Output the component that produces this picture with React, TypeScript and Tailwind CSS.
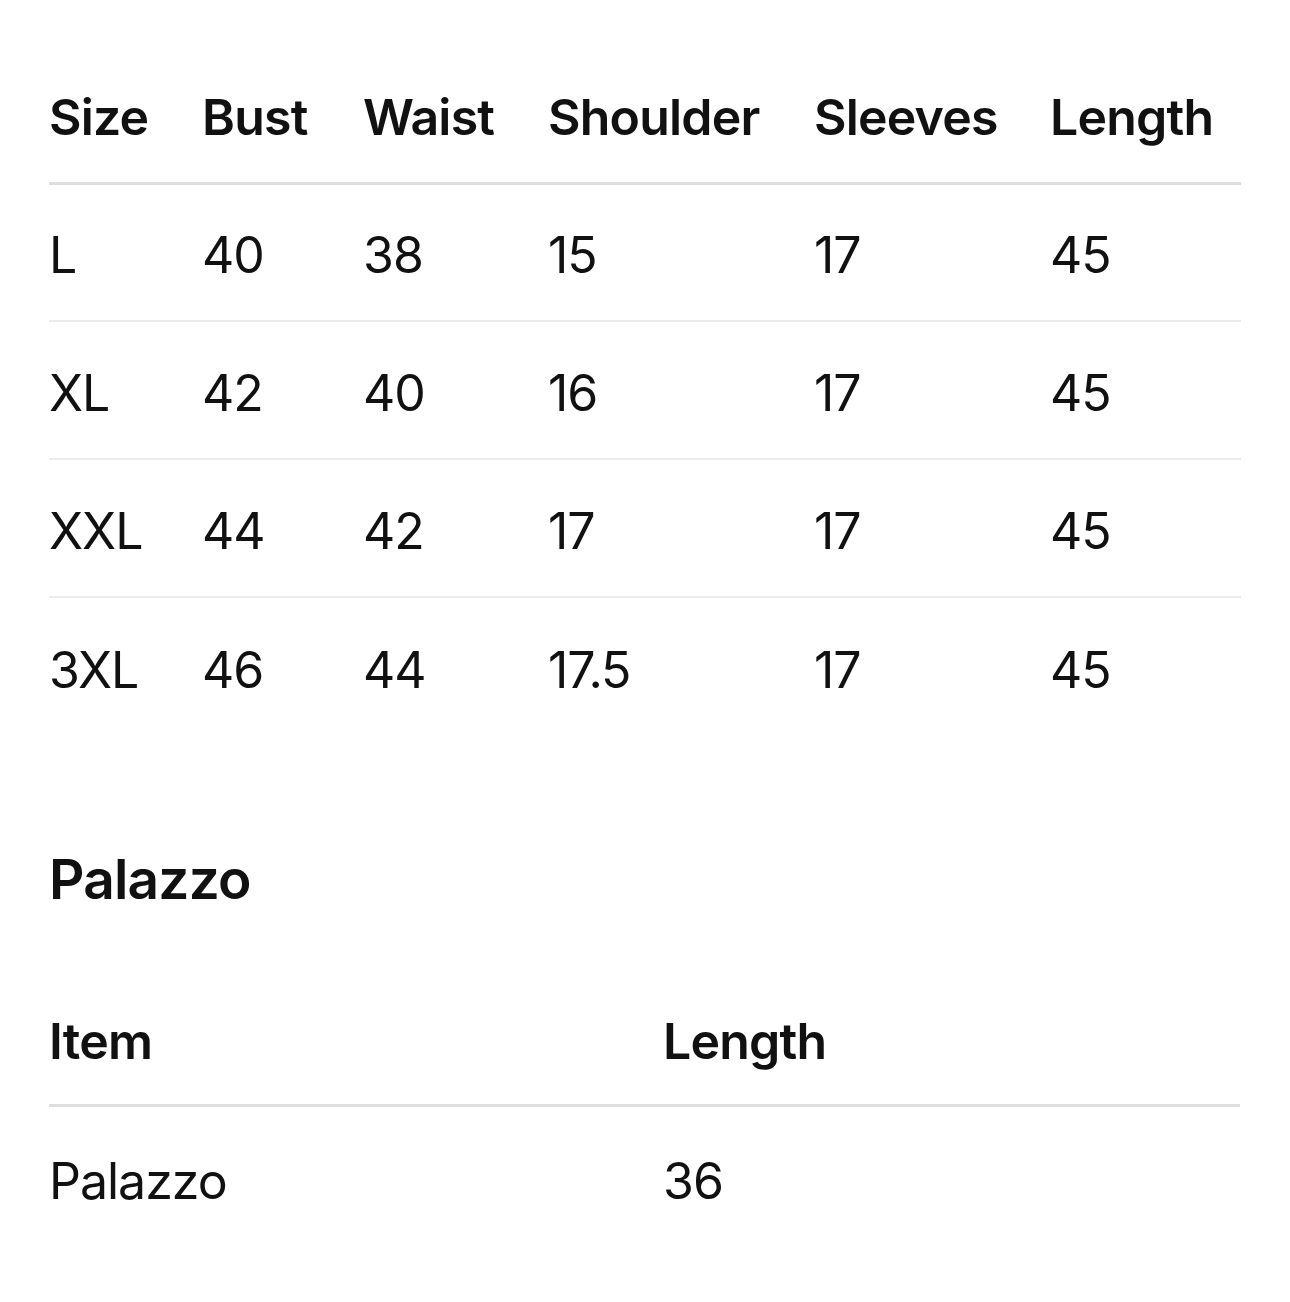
const sizeRows = [
  ["L", "40", "38", "15", "17", "45"],
  ["XL", "42", "40", "16", "17", "45"],
  ["XXL", "44", "42", "17", "17", "45"],
  ["3XL", "46", "44", "17.5", "17", "45"],
];

const sizeHeaders = ["Size", "Bust", "Waist", "Shoulder", "Sleeves", "Length"];
const sizeCols = ["w-[153px]", "w-[161px]", "w-[185px]", "w-[266px]", "w-[236px]", "w-[191px]"];

export default function App() {
  return (
    <div
      className="min-h-screen bg-white px-[49px] pt-[50px] text-[#111111]"
      style={{ fontFamily: "Inter, 'Noto Sans', sans-serif" }}
    >
      {/* Top */}
      <table className="w-[1192px] table-fixed border-collapse">
        <colgroup>
          {sizeCols.map((c, i) => (
            <col key={i} className={c} />
          ))}
        </colgroup>
        <thead>
          <tr className="h-[133px] border-b-[3px] border-[#dedede]">
            {sizeHeaders.map((h) => (
              <th
                key={h}
                className="p-0 pt-[3px] text-left align-middle text-[50px] font-semibold tracking-[-0.8px]"
              >
                {h}
              </th>
            ))}
          </tr>
        </thead>
        <tbody>
          {sizeRows.map((row, i) => (
            <tr
              key={row[0]}
              className={
                i < sizeRows.length - 1
                  ? "h-[138px] border-b-2 border-[#ebebeb]"
                  : "h-[138px]"
              }
            >
              {row.map((v, j) => (
                <td key={j} className="p-0 pt-[7px] text-left align-middle text-[50px] font-normal tracking-[-1px]">
                  {v}
                </td>
              ))}
            </tr>
          ))}
        </tbody>
      </table>

      <h2 className="mt-[110px] text-[55px] font-semibold leading-[68px] tracking-[-0.8px]">
        Palazzo
      </h2>

      <table className="mt-[64px] w-[1191px] table-fixed border-collapse">
        <colgroup>
          <col className="w-[614px]" />
          <col className="w-[577px]" />
        </colgroup>
        <thead>
          <tr className="h-[128px] border-b-[3px] border-[#dedede]">
            <th className="p-0 pt-[3px] text-left align-middle text-[50px] font-semibold tracking-[-0.8px]">Item</th>
            <th className="p-0 pt-[3px] text-left align-middle text-[50px] font-semibold tracking-[-0.8px]">Length</th>
          </tr>
        </thead>
        <tbody>
          <tr className="h-[138px]">
            <td className="p-0 pt-[14px] text-left align-middle text-[50px] tracking-[-1px]">Palazzo</td>
            <td className="p-0 pt-[14px] text-left align-middle text-[50px] tracking-[-1px]">36</td>
          </tr>
        </tbody>
      </table>
    </div>
  );
}
